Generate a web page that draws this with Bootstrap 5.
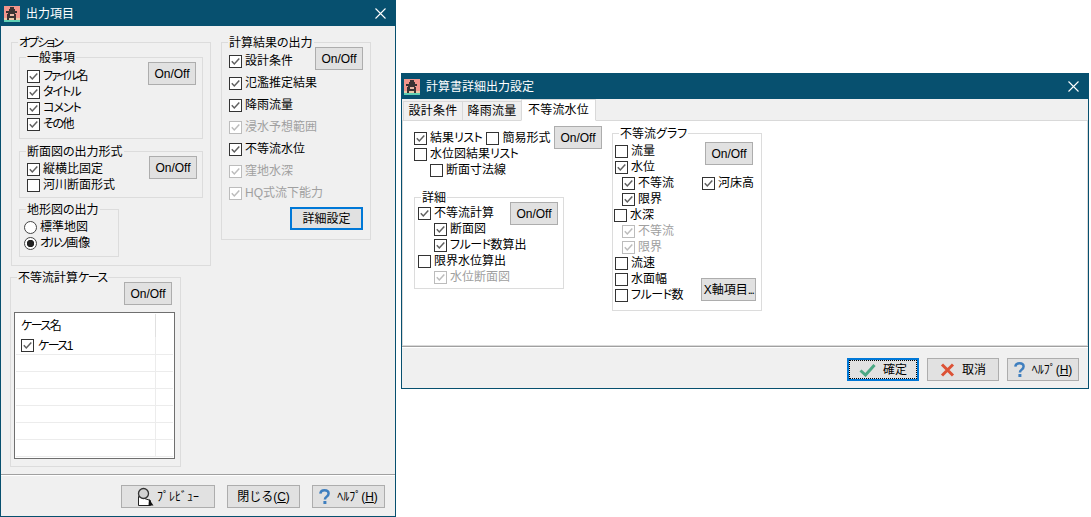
<!DOCTYPE html>
<html lang="ja">
<head>
<meta charset="utf-8">
<title>出力項目</title>
<link href="https://cdn.jsdelivr.net/npm/bootstrap@5.3.0/dist/css/bootstrap.min.css" rel="stylesheet">
<style>
html,body{height:100%;}
body{margin:0;background:#fff;color:#000;font:12px/16px "Liberation Sans","Noto Sans CJK JP",sans-serif;font-feature-settings:"palt";overflow:hidden;}
.desk{position:relative;width:1091px;height:517px;}
.dlg{position:absolute;background:#f0f0f0;border:1px solid #07506f;display:flex;flex-direction:column;}
.dlg-a{left:0;top:0;width:396px;height:517px;}
.dlg-b{left:401px;top:73px;width:688px;height:316px;}
.tbar{height:25px;flex:none;background:#07506f;color:#fff;display:flex;align-items:center;padding-left:3px;gap:6px;}
.dlg-b .tbar{padding-left:2px;}
.tbar .xbtn{margin-left:auto;margin-right:9px;display:flex;}
.foot{flex:none;height:42px;border-top:1px solid #a0a0a0;box-shadow:inset 0 1px 0 #fff;display:flex;justify-content:flex-end;align-items:flex-start;padding:10px 10px 0 0;gap:12px;}
.dlg-b .foot{padding:11px 9px 0 0;gap:8px;}
.wbtn{--bs-btn-padding-x:0;--bs-btn-padding-y:0;--bs-btn-font-size:12px;--bs-btn-line-height:16px;--bs-btn-border-radius:0;--bs-btn-color:#000;--bs-btn-bg:#e1e1e1;--bs-btn-border-color:#adadad;--bs-btn-hover-bg:#e1e1e1;--bs-btn-hover-border-color:#adadad;--bs-btn-hover-color:#000;font-family:inherit;flex:none;width:48px;height:23px;display:inline-flex;align-items:center;justify-content:center;gap:7px;white-space:nowrap;}
.w-73{width:73px;}
.w-94{width:94px;gap:3px;}
.w-72{width:72px;}
.w-55{width:55px;}
.wbtn-on{--bs-btn-border-color:#0078d7;--bs-btn-hover-border-color:#0078d7;border-width:2px;}
.wbtn-dot{outline:1px dotted #000;outline-offset:-3px;}
.gbox{position:relative;border:1px solid #dcdcdc;}
.gcap{position:absolute;top:-8px;left:6px;background:#f0f0f0;padding:0 1px;white-space:nowrap;line-height:16px;}
.tpanel .gcap{background:#fff;}
.kn05{letter-spacing:-.5px;}
.kn1{letter-spacing:-1px;}
.kn15{letter-spacing:-1.5px;}
.kn2{letter-spacing:-2px;}
.ck{display:flex;align-items:center;gap:3px;height:16px;white-space:nowrap;}
.ck.off{color:#a0a0a0;}
.ck22{height:22px;}
.cbx{width:13px;height:13px;margin:0;flex:none;border:1px solid #333;border-radius:0;background-color:#fff;appearance:none;-webkit-appearance:none;}
.cbx:checked{background:#fff url("data:image/svg+xml,%3Csvg xmlns='http://www.w3.org/2000/svg' viewBox='0 0 11 11'%3E%3Cpath d='M1.8 5.3 4.3 7.9 9.3 2.4' fill='none' stroke='%23606060' stroke-width='1.5'/%3E%3C/svg%3E") center/11px 11px no-repeat;}
.cbx:disabled{border-color:#bcbcbc;opacity:1;}
.cbx:disabled:checked{background:#fff url("data:image/svg+xml,%3Csvg xmlns='http://www.w3.org/2000/svg' viewBox='0 0 11 11'%3E%3Cpath d='M1.8 5.3 4.3 7.9 9.3 2.4' fill='none' stroke='%23bcbcbc' stroke-width='1.5'/%3E%3C/svg%3E") center/11px 11px no-repeat;}
.rdo{width:13px;height:13px;margin:0;flex:none;border:1px solid #444;border-radius:50%;background:#fff;appearance:none;-webkit-appearance:none;}
.rdo:checked{background:radial-gradient(circle,#222 0,#222 3.4px,#fff 4px);}
.body-a{flex:1 1 auto;display:flex;gap:10px;padding:16px 0 0 10px;}
.col-l{width:200px;flex:none;}
.col-r{width:150px;flex:none;}
.box-opt{height:224px;padding:0 7px;}
.box-gen{width:184px;height:82px;margin-top:14px;padding:10px 6px 0 7px;}
.box-sec{width:184px;height:47px;margin-top:12px;padding:9px 5px 0 7px;}
.box-map{width:100px;height:48px;margin-top:11px;padding:9px 0 0 4px;}
.box-res{height:198px;padding:7px 7px 0 7px;}
.box-case{width:171px;height:190px;margin:11px 0 0 -1px;padding:0 8px 0 3px;}
.up6{margin-top:-6px;}
.up5{margin-top:-5px;}
.up4{margin-top:-4px;}
.up3{margin-top:-3px;}
.mt-3p{margin-top:3px;}
.rows-res{width:86px;}
.rows-det{width:91px;}
.clist{width:161px;height:147px;background:#fff;border:1px solid #6f6f6f;box-shadow:inset 0 0 0 1px #fff;padding:1px 1px 0 1px;margin-top:7px;overflow:hidden;}
.gridt{--bs-table-bg:transparent;border-collapse:collapse;width:157px;table-layout:fixed;margin:0;}
.gridt td{padding:0 0 0 1px;height:17px;border-right:1px solid #ececec;border-bottom:1px solid #ececec;vertical-align:middle;}
.gridt td:last-child{border-right:0;width:18px;}
.gridt tr.hd td{height:23px;border-bottom:0;padding-left:5px;border-right-color:#e0e0e0;}
.gridt tr.r1 .ck{height:15px;margin-top:1px;}
.tabs{--bs-nav-tabs-border-width:1px;--bs-nav-tabs-border-color:#d9d9d9;--bs-nav-tabs-border-radius:0;--bs-nav-tabs-link-active-bg:#fff;--bs-nav-tabs-link-active-color:#000;--bs-nav-tabs-link-active-border-color:#d9d9d9 #d9d9d9 #fff;--bs-nav-link-padding-x:0;--bs-nav-link-padding-y:0;--bs-nav-link-color:#000;--bs-nav-link-hover-color:#000;--bs-nav-link-font-size:12px;padding:1px 0 0 1px;flex:none;height:22px;}
.tabs .nav-link{height:20px;margin-top:1px;width:60px;text-align:center;line-height:18px;border-color:#d9d9d9;background:#f0f0f0;font-size:12px;letter-spacing:.2px;}
.tabs .nav-item+.nav-item .nav-link{margin-left:-1px;}
.tabs .nav-link.active{height:22px;margin-top:-1px;width:75px;line-height:20px;background:#fff;}
.tpanel{flex:1 1 auto;background:#fff;border:1px solid #d9d9d9;border-top:0;margin:0;display:flex;gap:10px;padding:0 0 0 11px;}
.tl{width:188px;flex:none;}
.box-det{width:150px;height:92px;margin-top:19px;padding:7px 5px 0 3px;}
.box-gra{width:150px;height:178px;margin-top:12px;padding:9px 0 0 2px;}
.top-l{padding-top:9px;}
.ind{margin-left:16px;}
.ind7{margin-left:7px;}
.out1{margin-left:-1px;}
.gra-l{width:85px;flex:none;}
.gra-r{flex:none;margin-top:-1px;}
.m-onoff{margin:0 0 0 5px;}
.m-river{margin:10px 0 0 2px;}
.m-xax{margin:87px 0 0 1px;}
</style>
</head>
<body>
<div class="desk">

<div class="dlg dlg-a">
  <div class="tbar">
    <svg width="16" height="16" viewBox="0 0 16 16" shape-rendering="crispEdges"><rect width="16" height="16" fill="#f2958c"/><rect y="12" width="16" height="2" fill="#e9c9a8"/><rect y="14" width="16" height="2" fill="#5fd0b4"/><path d="M6 1h4v2h1v2h2v2h-2v1h1v6h-2v-2H5v2H3V8h1V7H2V5h3V3h1z" fill="#3b3233"/><rect x="6" y="8" width="4" height="2" fill="#e8b9a8"/></svg>
    <span>出力項目</span>
    <span class="xbtn"><svg width="11" height="11" viewBox="0 0 11 11"><path d="M.5.5l10 10M10.5.5l-10 10" stroke="#fff" stroke-width="1.1"/></svg></span>
  </div>
  <div class="body-a">
    <div class="col-l">
      <div class="gbox box-opt">
        <span class="gcap kn2">オプション</span>
        <div class="gbox box-gen">
          <span class="gcap">一般事項</span>
          <div class="d-flex justify-content-between align-items-start">
            <div>
              <label class="ck"><input type="checkbox" class="cbx" checked><span><span class="kn2">ファイル</span>名</span></label>
              <label class="ck"><input type="checkbox" class="cbx" checked><span class="kn1">タイトル</span></label>
              <label class="ck"><input type="checkbox" class="cbx" checked><span class="kn1">コメント</span></label>
              <label class="ck"><input type="checkbox" class="cbx" checked><span><span class="kn15">その</span>他</span></label>
            </div>
            <button type="button" class="btn wbtn up6">On/Off</button>
          </div>
        </div>
        <div class="gbox box-sec">
          <span class="gcap">断面図の出力形式</span>
          <div class="d-flex justify-content-between align-items-start">
            <div>
              <label class="ck"><input type="checkbox" class="cbx" checked>縦横比固定</label>
              <label class="ck"><input type="checkbox" class="cbx">河川断面形式</label>
            </div>
            <button type="button" class="btn wbtn up5">On/Off</button>
          </div>
        </div>
        <div class="gbox box-map">
          <span class="gcap">地形図の出力</span>
          <label class="ck"><input type="radio" name="m" class="rdo">標準地図</label>
          <label class="ck"><input type="radio" name="m" class="rdo" checked><span><span class="kn2">オルソ</span>画像</span></label>
        </div>
      </div>
      <div class="gbox box-case">
        <span class="gcap">不等流計算<span class="kn15">ケース</span></span>
        <div class="d-flex justify-content-end mt-1"><button type="button" class="btn wbtn">On/Off</button></div>
        <div class="clist">
          <table class="gridt">
            <tr class="hd"><td><span class="kn15">ケース</span>名</td><td></td></tr>
            <tr class="r1"><td><label class="ck gap-1 ms-1"><input type="checkbox" class="cbx" checked><span><span class="kn15">ケース</span>1</span></label></td><td></td></tr>
            <tr><td></td><td></td></tr>
            <tr><td></td><td></td></tr>
            <tr><td></td><td></td></tr>
            <tr><td></td><td></td></tr>
            <tr><td></td><td></td></tr>
            <tr><td></td><td></td></tr>
          </table>
        </div>
      </div>
    </div>
    <div class="col-r">
      <div class="gbox box-res">
        <span class="gcap">計算結果の出力</span>
        <div class="d-flex justify-content-between align-items-start">
          <div class="rows-res">
            <label class="ck ck22"><input type="checkbox" class="cbx" checked>設計条件</label>
            <label class="ck ck22"><input type="checkbox" class="cbx" checked>氾濫推定結果</label>
            <label class="ck ck22"><input type="checkbox" class="cbx" checked>降雨流量</label>
            <label class="ck ck22 off"><input type="checkbox" class="cbx" checked disabled>浸水予想範囲</label>
            <label class="ck ck22"><input type="checkbox" class="cbx" checked>不等流水位</label>
            <label class="ck ck22 off"><input type="checkbox" class="cbx" checked disabled>窪地水深</label>
            <label class="ck ck22 off"><input type="checkbox" class="cbx" checked disabled>HQ式流下能力</label>
          </div>
          <button type="button" class="btn wbtn up3">On/Off</button>
        </div>
        <div class="d-flex justify-content-end mt-3p"><button type="button" class="btn wbtn wbtn-on w-73">詳細設定</button></div>
      </div>
    </div>
  </div>
  <div class="foot">
    <button type="button" class="btn wbtn w-94">
      <svg width="17" height="20" viewBox="0 0 17 20"><path d="M1.500 9.500v9h12v-5z" fill="#fff" stroke="#222"/><circle cx="6.500" cy="6.500" r="5" fill="#d2d2d2" stroke="#333" stroke-width="1.3"/><path d="M12 12l4.500 6.500h-5z" fill="#111"/></svg>
      <span>ﾌﾟﾚﾋﾞｭｰ</span>
    </button>
    <button type="button" class="btn wbtn w-73"><span>閉じる(<u>C</u>)</span></button>
    <button type="button" class="btn wbtn w-73">
      <svg width="11" height="16" viewBox="0 0 11 16"><path d="M1.300 4.600C1.700 2.200 3.300 1.300 5.400 1.300 7.800 1.300 9.600 2.600 9.600 4.600c0 3-3.700 3-3.700 5.800" fill="none" stroke="#3f7fbf" stroke-width="2.500"/><rect x="4.400" y="12" width="3" height="3" fill="#3f7fbf"/></svg>
      <span>ﾍﾙﾌﾟ(<u>H</u>)</span>
    </button>
  </div>
</div>

<div class="dlg dlg-b">
  <div class="tbar">
    <svg width="16" height="16" viewBox="0 0 16 16" shape-rendering="crispEdges"><rect width="16" height="16" fill="#f2958c"/><rect y="12" width="16" height="2" fill="#e9c9a8"/><rect y="14" width="16" height="2" fill="#5fd0b4"/><path d="M6 1h4v2h1v2h2v2h-2v1h1v6h-2v-2H5v2H3V8h1V7H2V5h3V3h1z" fill="#3b3233"/><rect x="6" y="8" width="4" height="2" fill="#e8b9a8"/></svg>
    <span>計算書詳細出力設定</span>
    <span class="xbtn"><svg width="11" height="11" viewBox="0 0 11 11"><path d="M.5.5l10 10M10.500.5l-10 10" stroke="#fff" stroke-width="1.1"/></svg></span>
  </div>
  <ul class="nav nav-tabs tabs">
    <li class="nav-item"><a class="nav-link" href="#">設計条件</a></li>
    <li class="nav-item"><a class="nav-link" href="#">降雨流量</a></li>
    <li class="nav-item"><a class="nav-link active" href="#">不等流水位</a></li>
  </ul>
  <div class="tpanel">
    <div class="tl">
      <div class="d-flex justify-content-between align-items-start top-l">
        <div>
          <div class="d-flex gap-1">
            <label class="ck"><input type="checkbox" class="cbx" checked><span>結果<span class="kn05">リスト</span></span></label>
            <label class="ck"><input type="checkbox" class="cbx">簡易形式</label>
          </div>
          <label class="ck"><input type="checkbox" class="cbx"><span>水位図結果<span class="kn05">リスト</span></span></label>
          <label class="ck ind"><input type="checkbox" class="cbx">断面寸法線</label>
        </div>
        <button type="button" class="btn wbtn up4">On/Off</button>
      </div>
      <div class="gbox box-det">
        <span class="gcap">詳細</span>
        <div class="d-flex justify-content-between align-items-start">
          <div class="rows-det">
            <label class="ck"><input type="checkbox" class="cbx" checked>不等流計算</label>
            <label class="ck ind"><input type="checkbox" class="cbx" checked>断面図</label>
            <label class="ck ind"><input type="checkbox" class="cbx" checked><span><span class="kn05">フルード</span>数算出</span></label>
            <label class="ck"><input type="checkbox" class="cbx">限界水位算出</label>
            <label class="ck ind off"><input type="checkbox" class="cbx" checked disabled>水位断面図</label>
          </div>
          <button type="button" class="btn wbtn up3">On/Off</button>
        </div>
      </div>
    </div>
    <div class="gbox box-gra d-flex">
      <span class="gcap">不等流グラフ</span>
      <div class="gra-l">
        <label class="ck"><input type="checkbox" class="cbx">流量</label>
        <label class="ck"><input type="checkbox" class="cbx" checked>水位</label>
        <label class="ck ind7"><input type="checkbox" class="cbx" checked>不等流</label>
        <label class="ck ind7"><input type="checkbox" class="cbx" checked>限界</label>
        <label class="ck out1"><input type="checkbox" class="cbx">水深</label>
        <label class="ck ind7 off"><input type="checkbox" class="cbx" checked disabled>不等流</label>
        <label class="ck ind7 off"><input type="checkbox" class="cbx" checked disabled>限界</label>
        <label class="ck"><input type="checkbox" class="cbx">流速</label>
        <label class="ck"><input type="checkbox" class="cbx">水面幅</label>
        <label class="ck"><input type="checkbox" class="cbx"><span><span class="kn05">フルード</span>数</span></label>
      </div>
      <div class="gra-r d-flex flex-column align-items-start">
        <button type="button" class="btn wbtn m-onoff">On/Off</button>
        <label class="ck m-river"><input type="checkbox" class="cbx" checked>河床高</label>
        <button type="button" class="btn wbtn w-55 m-xax"><span>X軸項目<span class="kn15">...</span></span></button>
      </div>
    </div>
  </div>
  <div class="foot">
    <button type="button" class="btn wbtn wbtn-on wbtn-dot w-72">
      <svg width="17" height="14" viewBox="0 0 17 14"><path d="M1.500 7.500 6.500 12 15.500 2" fill="none" stroke="#4aa884" stroke-width="3"/></svg>
      <span>確定</span>
    </button>
    <button type="button" class="btn wbtn w-72">
      <svg width="15" height="14" viewBox="0 0 15 14"><path d="M2 1.500 13 12.500M13 1.500 2 12.500" fill="none" stroke="#dc5236" stroke-width="3"/></svg>
      <span>取消</span>
    </button>
    <button type="button" class="btn wbtn w-72">
      <svg width="11" height="16" viewBox="0 0 11 16"><path d="M1.300 4.600C1.700 2.200 3.300 1.300 5.400 1.300 7.800 1.300 9.600 2.600 9.600 4.600c0 3-3.700 3-3.700 5.800" fill="none" stroke="#3f7fbf" stroke-width="2.500"/><rect x="4.400" y="12" width="3" height="3" fill="#3f7fbf"/></svg>
      <span>ﾍﾙﾌﾟ(<u>H</u>)</span>
    </button>
  </div>
</div>

</div>
<script src="https://cdn.jsdelivr.net/npm/bootstrap@5.3.0/dist/js/bootstrap.bundle.min.js"></script>
</body>
</html>
